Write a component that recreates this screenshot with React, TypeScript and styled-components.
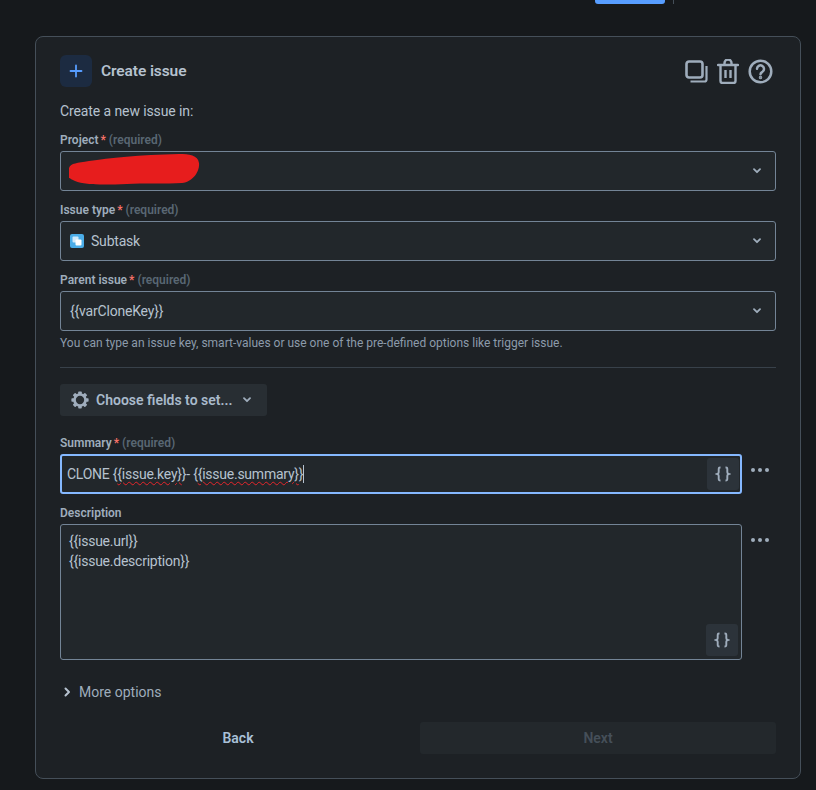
import React from "react";
import styled, { createGlobalStyle } from "styled-components";

const Global = createGlobalStyle`
	html, body {
		margin: 0;
		padding: 0;
		background: #16181b;
		height: 100%;
		overflow: hidden;
	}
	* { box-sizing: border-box; }
`;
const Page = styled.div`
	width: 816px;
	height: 790px;
	background: #16191c;
	font-family: Roboto, "Open Sans", sans-serif;
	font-size: 14px;
	color: #b6c2cf;
`;
const TopStrip = styled.div`
	height: 36px;
	display: flex;
	align-items: flex-start;
	padding-left: 595px;
`;
const TopButton = styled.div`
	width: 70px;
	height: 4px;
	background: #579dff;
	border-radius: 0 0 3px 3px;
`;
const TopRule = styled.div`
	width: 1px;
	height: 4px;
	margin-left: 8px;
	background: #454f59;
`;
const Card = styled.div`
	width: 766px;
	height: 743px;
	margin-left: 35px;
	padding: 18px 24px 0;
	background: #1d2125;
	border: 1px solid #454f59;
	border-radius: 8px;
	display: flex;
	flex-direction: column;
`;
const Header = styled.div`
	height: 32px;
	display: flex;
	align-items: center;
`;
const PlusTile = styled.div`
	width: 32px;
	height: 32px;
	border-radius: 6px;
	background: #1c2b41;
	display: flex;
	align-items: center;
	justify-content: center;
`;
const Title = styled.h2`
	margin: 0 0 0 9px;
	flex: 1;
	font-size: 15.5px;
	font-weight: 600;
	letter-spacing: -0.1px;
	color: #b6c2cf;
`;
const Actions = styled.div`
	display: flex;
	align-items: center;
	gap: 9px;
	margin-right: 3px;
`;
const Intro = styled.div`
	height: 20px;
	line-height: 20px;
	margin: 14px 0 11px;
	letter-spacing: -0.1px;
`;
const Fields = styled.div`
	display: flex;
	flex-direction: column;
	gap: 11px;
`;
const Label = styled.div`
	height: 16px;
	line-height: 16px;
	margin-bottom: 3px;
	font-size: 12px;
	font-weight: 600;
	color: #9fadbc;
`;
const Star = styled.span`
	color: #f87168;
	margin-left: 2px;
`;
const Required = styled.span`
	color: #596773;
	margin-left: 3px;
`;
const Select = styled.div`
	position: relative;
	height: 40px;
	padding: 0 14px 0 9px;
	display: flex;
	align-items: center;
	gap: 7px;
	background: #22272b;
	border: 1px solid #738496;
	border-radius: 3px;
`;
const SelectValue = styled.span`
	flex: 1;
	letter-spacing: -0.2px;
`;
const Scribble = styled.svg`
	position: absolute;
	left: 6px;
	top: 1px;
`;
const Helper = styled.div`
	height: 16px;
	line-height: 16px;
	margin-top: 4px;
	font-size: 12px;
	color: #8c9bab;
`;
const Divider = styled.hr`
	margin: 16px 0;
	border: 0;
	border-top: 1px solid #38414a;
	height: 0;
	width: 100%;
`;
const ChooseButton = styled.div`
	align-self: flex-start;
	width: 207px;
	height: 32px;
	padding-left: 11px;
	display: flex;
	align-items: center;
	background: #282e33;
	border-radius: 3px;
	font-weight: 600;
	font-size: 14px;
	color: #a9bacb;
`;
const ChooseText = styled.span`
	margin: 0 11px 0 7px;
`;
const Lower = styled(Fields)`
	margin-top: 19px;
`;
const FieldRow = styled.div`
	display: flex;
	align-items: flex-start;
`;
const Input = styled.div<{ $focused?: boolean; $tall?: boolean }>`
	width: 682px;
	height: ${(p) => (p.$tall ? "136px" : "40px")};
	display: flex;
	justify-content: space-between;
	align-items: ${(p) => (p.$tall ? "stretch" : "center")};
	background: #22272b;
	border: ${(p) => (p.$focused ? "2px solid #85b8ff" : "1px solid #738496")};
	border-radius: 3px;
	padding: ${(p) => (p.$focused ? "0 1px 0 5px" : "0 3px 3px 8px")};
`;
const InputText = styled.div`
	line-height: 20px;
	white-space: nowrap;
	letter-spacing: -0.24px;
`;
const DescriptionText = styled(InputText)`
	padding-top: 6px;
`;
const Misspelt = styled.span`
	text-decoration: underline wavy #e5262b 1px;
	text-underline-offset: 2px;
`;
const Caret = styled.span`
	display: inline-block;
	width: 1px;
	height: 18px;
	vertical-align: -4px;
	background: #b6c2cf;
`;
const Braces = styled.div<{ $tall?: boolean }>`
	width: 32px;
	height: 32px;
	align-self: ${(p) => (p.$tall ? "flex-end" : "center")};
	display: flex;
	align-items: center;
	justify-content: center;
	background: #2c333a;
	border-radius: 3px;
`;
const Dots = styled.svg`
	margin: 14px 0 0 9px;
`;
const MoreOptions = styled.div`
	height: 20px;
	line-height: 20px;
	margin: 22px 0 20px 4px;
	display: flex;
	align-items: center;
	color: #9fadbc;
`;
const MoreText = styled.span`
	margin-left: 8px;
`;
const Buttons = styled.div`
	display: grid;
	grid-template-columns: 1fr 1fr;
	gap: 4px;
`;
const FooterButton = styled.div<{ $disabled?: boolean }>`
	height: 32px;
	display: flex;
	align-items: center;
	justify-content: center;
	font-weight: 600;
	font-size: 14px;
	border-radius: 3px;
	background: ${(p) => (p.$disabled ? "#23282c" : "transparent")};
	color: ${(p) => (p.$disabled ? "#454f59" : "#a9c0d8")};
`;

function Chevron({ color = "#9fadbc" }: { color?: string }) {
	return (
		<svg width='8' height='6' viewBox='0 0 8 6' fill='none'>
			<path d='M1 1.2 4 4.2l3-3' stroke={color} strokeWidth='1.8' strokeLinecap='round' strokeLinejoin='round' />
		</svg>
	);
}

function BraceIcon() {
	return (
		<svg width='16' height='16' viewBox='0 0 16 16' fill='none' stroke='#9fadbc' strokeWidth='1.9'>
			<path d='M5.500 1.500H5c-.8 0-1.300.4-1.300 1.200v3.600c0 .9-.5 1.400-1.500 1.700 1 .3 1.500.8 1.500 1.700v3.600c0 .8.5 1.200 1.300 1.200h.5' />
			<path d='M10.500 1.500h.5c.8 0 1.300.4 1.300 1.200v3.600c0 .9.5 1.400 1.500 1.700-1 .3-1.500.8-1.500 1.700v3.600c0 .8-.5 1.200-1.300 1.200h-.5' />
		</svg>
	);
}

function MoreDots() {
	return (
		<Dots width='18' height='4' viewBox='0 0 18 4' fill='#9fadbc'>
			<circle cx='2' cy='2' r='2' />
			<circle cx='9' cy='2' r='2' />
			<circle cx='16' cy='2' r='2' />
		</Dots>
	);
}

function Gear() {
	const teeth = [0, 45, 90, 135, 180, 225, 270, 315];
	return (
		<svg width='18' height='18' viewBox='0 0 19 19' fill='none'>
			<circle cx='9.500' cy='9.500' r='5.800' stroke='#9fadbc' strokeWidth='2.800' />
			{teeth.map((a) => (
				<rect key={a} x='7.600' y='0.400' width='3.800' height='3.600' rx='0.800' fill='#9fadbc' transform={`rotate(${a} 9.500 9.500)`} />
			))}
		</svg>
	);
}

function FieldLabel({ name, required }: { name: string; required?: boolean }) {
	return (
		<Label>
			{name}
			{required && <Star>*</Star>}
			{required && <Required>(required)</Required>}
		</Label>
	);
}

export default function App() {
	return (
		<Page>
			<Global />
			<TopStrip>
				<TopButton />
				<TopRule />
			</TopStrip>
			<Card>
				<Header>
					<PlusTile>
						<svg width='14' height='14' viewBox='0 0 14 14' fill='none'>
							<path d='M7 1.500v11M1.500 7h11' stroke='#579dff' strokeWidth='1.800' strokeLinecap='round' />
						</svg>
					</PlusTile>
					<Title>Create issue</Title>
					<Actions>
						<svg width='23' height='23' viewBox='0 0 23 23' fill='none' stroke='#9fadbc' strokeWidth='2.600'>
							<rect x='1.500' y='1.500' width='16' height='16' rx='2.500' />
							<path d='M21.500 6v13.500a2 2 0 0 1-2 2H5.500' strokeWidth='2.200' />
						</svg>
						<svg width='22' height='25' viewBox='0 0 22 25' fill='none' stroke='#9fadbc' strokeWidth='2.400'>
							<path d='M1 6h20' strokeLinecap='round' />
							<path d='M7.500 5.500V4a3.500 3.500 0 0 1 7 0v1.500' />
							<path d='M3.500 6v16a2 2 0 0 0 2 2h11a2 2 0 0 0 2-2V6' />
							<path d='M8.500 11v8M13.500 11v8' />
						</svg>
						<svg width='25' height='25' viewBox='0 0 25 25' fill='none' stroke='#9fadbc' strokeWidth='2.500'>
							<circle cx='12.500' cy='12.500' r='10.800' />
							<path d='M9 9.800a3.500 3.500 0 1 1 5.400 3c-1.200.7-1.900 1.300-1.900 2.400' strokeLinecap='round' />
							<circle cx='12.500' cy='18.500' r='0.500' fill='#9fadbc' />
						</svg>
					</Actions>
				</Header>
				<Intro>Create a new issue in:</Intro>
				<Fields>
					<div>
						<FieldLabel name='Project' required />
						<Select>
							<Scribble width='134' height='32' viewBox='0 0 134 32'>
								<path
									d='M2 15c2-5 8-5 20-7 20-3 50-6 90-7 10 0 19 1 20 9 1 8-6 19-17 20-15 1-40 0-55 1-25 1-42 1-52-3-3-1-5-3-6-3z'
									fill='#e71d1d'
								/>
							</Scribble>
							<SelectValue />
							<Chevron />
						</Select>
					</div>
					<div>
						<FieldLabel name='Issue type' required />
						<Select>
							<svg width='14' height='14' viewBox='0 0 14 14'>
								<rect width='14' height='14' rx='2' fill='#4bade8' />
								<rect x='2.500' y='2.500' width='6' height='6' rx='1' fill='#cfe9fa' />
								<rect x='5.500' y='5.500' width='6' height='6' rx='1' fill='#fff' />
							</svg>
							<SelectValue>Subtask</SelectValue>
							<Chevron />
						</Select>
					</div>
					<div>
						<FieldLabel name='Parent issue' required />
						<Select>
							<SelectValue>{"{{varCloneKey}}"}</SelectValue>
							<Chevron />
						</Select>
						<Helper>You can type an issue key, smart-values or use one of the pre-defined options like trigger issue.</Helper>
					</div>
				</Fields>
				<Divider />
				<ChooseButton>
					<Gear />
					<ChooseText>Choose fields to set...</ChooseText>
					<Chevron />
				</ChooseButton>
				<Lower>
					<div>
						<FieldLabel name='Summary' required />
						<FieldRow>
							<Input $focused>
								<InputText>
									CLONE {"{"}
									<Misspelt>{"{issue.key}"}</Misspelt>
									{"}- {"}
									<Misspelt>{"{issue.summary}"}</Misspelt>
									{"}"}
									<Caret />
								</InputText>
								<Braces>
									<BraceIcon />
								</Braces>
							</Input>
							<MoreDots />
						</FieldRow>
					</div>
					<div>
						<FieldLabel name='Description' />
						<FieldRow>
							<Input $tall>
								<DescriptionText>
									{"{{issue.url}}"}
									<br />
									{"{{issue.description}}"}
								</DescriptionText>
								<Braces $tall>
									<BraceIcon />
								</Braces>
							</Input>
							<MoreDots />
						</FieldRow>
					</div>
				</Lower>
				<MoreOptions>
					<svg width='7' height='10' viewBox='0 0 7 10' fill='none'>
						<path d='M1.500 1.500 5 5 1.500 8.500' stroke='#b6c2cf' strokeWidth='2' strokeLinecap='round' strokeLinejoin='round' />
					</svg>
					<MoreText>More options</MoreText>
				</MoreOptions>
				<Buttons>
					<FooterButton>Back</FooterButton>
					<FooterButton $disabled>Next</FooterButton>
				</Buttons>
			</Card>
		</Page>
	);
}
